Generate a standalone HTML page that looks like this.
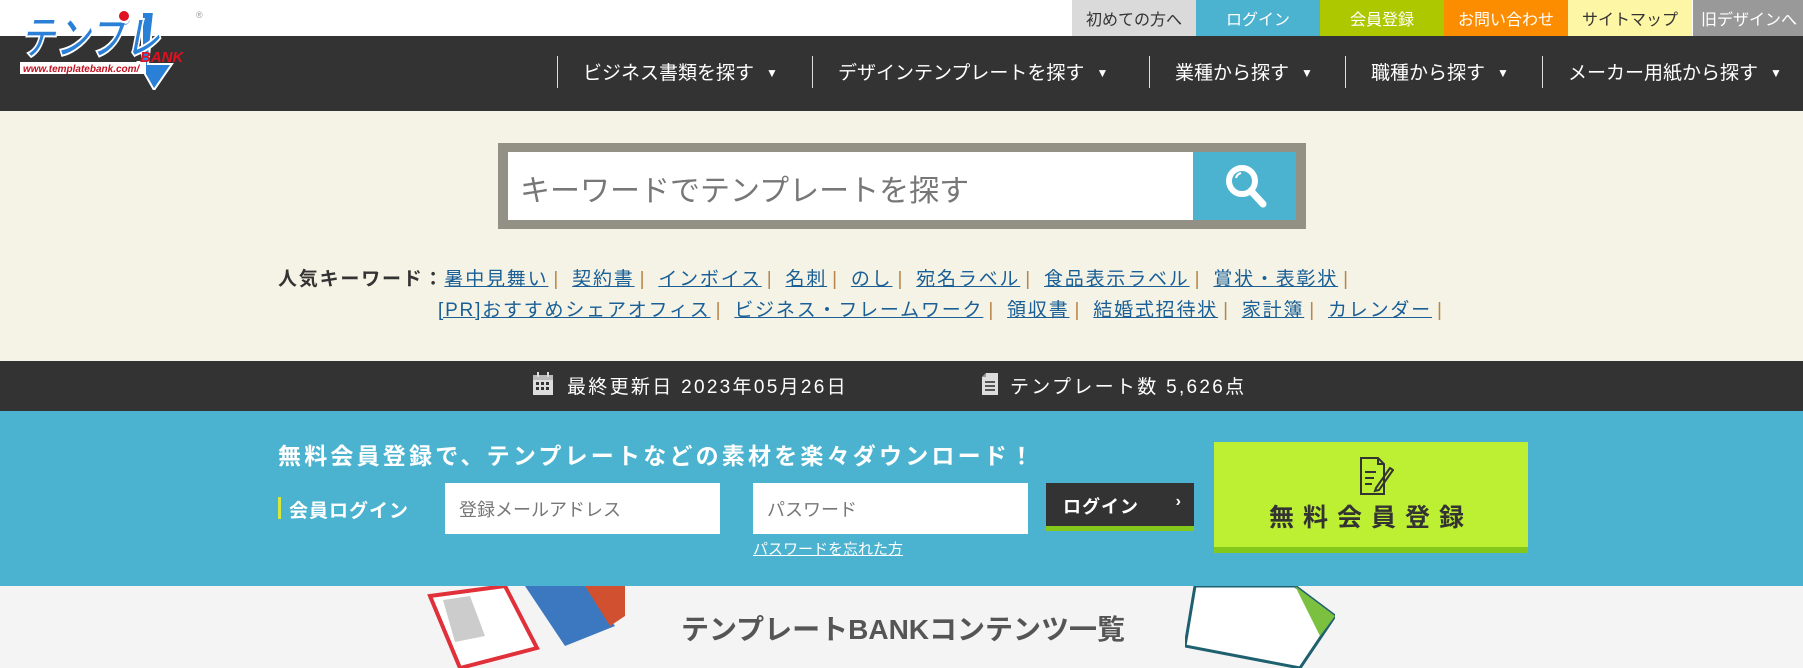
<!DOCTYPE html>
<html><head><meta charset="utf-8"><style>
*{margin:0;padding:0;box-sizing:border-box}
body{width:1803px;height:668px;overflow:hidden;background:#f4f4f4;font-family:"Liberation Sans","Noto Sans CJK JP",sans-serif;position:relative}
.a{position:absolute}
.top{top:0;height:36px;display:flex;align-items:center;justify-content:center;font-size:16px;width:124px}
.nav{top:36px;left:0;width:1803px;height:75px;background:#333}
.sep{top:56px;width:1px;height:32px;background:#ddd}
.nt{top:58px;color:#fff;font-size:19px;white-space:nowrap}
.nt b{font-weight:normal;font-size:12px;margin-left:12px;position:relative;top:-2px}
.kw{font-size:19px;color:#333;white-space:nowrap;letter-spacing:1.8px}
.kw a{color:#1a5f96;text-decoration:underline}
.kw i{font-style:normal;color:#b8864b;margin:0 12px 0 5px}
</style></head><body>
<div class="a" style="top:0;left:0;width:1803px;height:36px;background:#fff"></div>
<div class="a top" style="left:1072px;background:#dadada;color:#333">初めての方へ</div>
<div class="a top" style="left:1196px;background:#4bb3cf;color:#fff">ログイン</div>
<div class="a top" style="left:1320px;background:#aec800;color:#fff">会員登録</div>
<div class="a top" style="left:1444px;background:#fc8c00;color:#fff">お問い合わせ</div>
<div class="a top" style="left:1568px;background:#fdf6a5;color:#333">サイトマップ</div>
<div class="a top" style="left:1693px;width:110px;background:#999;color:#fff;justify-content:flex-start;padding-left:8px;white-space:nowrap;overflow:hidden">旧デザインへ</div>
<div class="a nav"></div>
<svg class="a" style="left:14px;top:4px" width="190" height="86" viewBox="0 0 190 86">
<polygon points="128,8 140,8 134,60 158,60 140,86 124,58 128,58" fill="#2a7fd6" stroke="#fff" stroke-width="2"/>
<text x="6" y="50" font-size="46" font-weight="bold" font-style="italic" fill="#2a7fd6" stroke="#fff" stroke-width="2" font-family="Liberation Sans,Noto Sans CJK JP,sans-serif" textLength="140" lengthAdjust="spacingAndGlyphs">テンプレ</text>
<circle cx="110" cy="12" r="6" fill="#e01020" stroke="#fff" stroke-width="2"/>
<text x="126" y="58" font-size="15" font-weight="bold" font-style="italic" fill="#e01020" font-family="Liberation Sans,sans-serif">BANK</text>
<rect x="6" y="58" width="126" height="12" fill="#fff"/>
<text x="9" y="68" font-size="10" font-style="italic" font-weight="bold" fill="#c01020" font-family="Liberation Sans,sans-serif">www.templatebank.com/</text>
<text x="182" y="14" font-size="9" fill="#999">®</text>
</svg>
<div class="a sep" style="left:557px"></div><div class="a nt" style="left:583px">ビジネス書類を探す<b>▼</b></div>
<div class="a sep" style="left:812px"></div><div class="a nt" style="left:838px">デザインテンプレートを探す<b>▼</b></div>
<div class="a sep" style="left:1149px"></div><div class="a nt" style="left:1175px">業種から探す<b>▼</b></div>
<div class="a sep" style="left:1345px"></div><div class="a nt" style="left:1371px">職種から探す<b>▼</b></div>
<div class="a sep" style="left:1542px"></div><div class="a nt" style="left:1568px">メーカー用紙から探す<b>▼</b></div>
<div class="a" style="top:111px;left:0;width:1803px;height:250px;background:#f5f3e5"></div>
<div class="a" style="left:498px;top:143px;width:808px;height:86px;background:#939186"></div>
<div class="a" style="left:508px;top:152px;width:685px;height:68px;background:#fff;font-size:30px;color:#777;padding:14px 12px;white-space:nowrap">キーワードでテンプレートを探す</div>
<div class="a" style="left:1193px;top:152px;width:103px;height:68px;background:#4bb3cf"></div>
<svg class="a" style="left:1223px;top:162px" width="48" height="50" viewBox="0 0 48 50"><circle cx="19" cy="19" r="13" fill="none" stroke="#fff" stroke-width="6"/><line x1="28" y1="29" x2="40" y2="42" stroke="#fff" stroke-width="7" stroke-linecap="round"/><path d="M13 16 A7 7 0 0 1 18 11" stroke="#fff" stroke-width="2" fill="none"/></svg>
<div class="a kw" style="left:278px;top:264px"><b>人気キーワード：</b><a>暑中見舞い</a><i>|</i><a>契約書</a><i>|</i><a>インボイス</a><i>|</i><a>名刺</a><i>|</i><a>のし</a><i>|</i><a>宛名ラベル</a><i>|</i><a>食品表示ラベル</a><i>|</i><a>賞状・表彰状</a><i>|</i></div>
<div class="a kw" style="left:438px;top:295px"><a>[PR]おすすめシェアオフィス</a><i>|</i><a>ビジネス・フレームワーク</a><i>|</i><a>領収書</a><i>|</i><a>結婚式招待状</a><i>|</i><a>家計簿</a><i>|</i><a>カレンダー</a><i>|</i></div>
<div class="a" style="top:361px;left:0;width:1803px;height:50px;background:#333"></div>
<svg class="a" style="left:532px;top:372px" width="22" height="24" viewBox="0 0 22 24"><rect x="1" y="3" width="20" height="20" fill="#ddd"/><rect x="1" y="3" width="20" height="5" fill="#bbb"/><g fill="#333"><rect x="4" y="10" width="3" height="3"/><rect x="9" y="10" width="3" height="3"/><rect x="14" y="10" width="3" height="3"/><rect x="4" y="15" width="3" height="3"/><rect x="9" y="15" width="3" height="3"/><rect x="14" y="15" width="3" height="3"/></g><rect x="5" y="0" width="2" height="5" fill="#ddd"/><rect x="15" y="0" width="2" height="5" fill="#ddd"/></svg>
<div class="a" style="left:567px;top:372px;color:#fff;font-size:19px;letter-spacing:2.3px">最終更新日 2023年05月26日</div>
<svg class="a" style="left:981px;top:372px" width="18" height="24" viewBox="0 0 18 24"><path d="M5 1H17V23H1V5Z" fill="#ddd"/><path d="M1 5H5V1" fill="#999"/><g fill="#555"><rect x="4" y="9" width="10" height="2"/><rect x="4" y="13" width="10" height="2"/><rect x="4" y="17" width="10" height="2"/></g></svg>
<div class="a" style="left:1010px;top:372px;color:#fff;font-size:19px;letter-spacing:2.3px">テンプレート数 5,626点</div>
<div class="a" style="top:411px;left:0;width:1803px;height:175px;background:#4bb3cf"></div>
<div class="a" style="left:278px;top:437px;color:#fff;font-size:23px;font-weight:bold;white-space:nowrap;letter-spacing:3.2px">無料会員登録で、テンプレートなどの素材を楽々ダウンロード！</div>
<div class="a" style="left:278px;top:497px;width:3px;height:22px;background:#d8e83a"></div>
<div class="a" style="left:289px;top:496px;color:#fff;font-size:19px;font-weight:bold;letter-spacing:1px">会員ログイン</div>
<div class="a" style="left:445px;top:483px;width:275px;height:51px;background:#fff;color:#777;font-size:18px;padding:13px 14px">登録メールアドレス</div>
<div class="a" style="left:753px;top:483px;width:275px;height:51px;background:#fff;color:#777;font-size:18px;padding:13px 14px">パスワード</div>
<div class="a" style="left:1046px;top:483px;width:148px;height:48px;background:#333;border-bottom:5px solid #84c81c;color:#fff;font-size:18px;font-weight:bold;padding:10px 17px;letter-spacing:1px">ログイン<span style="position:absolute;right:12px;font-size:16px">›</span></div>
<div class="a" style="left:753px;top:538px;color:#fff;font-size:15px;text-decoration:underline">パスワードを忘れた方</div>
<div class="a" style="left:1214px;top:442px;width:314px;height:111px;background:#bdef33;border-bottom:6px solid #84c81c"></div>
<svg class="a" style="left:1358px;top:456px" width="36" height="40" viewBox="0 0 36 40"><path d="M3 2H20L26 8V38H3Z" fill="none" stroke="#333" stroke-width="2"/><path d="M20 2V8H26" fill="none" stroke="#333" stroke-width="2"/><line x1="7" y1="16" x2="18" y2="16" stroke="#333" stroke-width="2"/><line x1="7" y1="22" x2="16" y2="22" stroke="#333" stroke-width="2"/><line x1="7" y1="28" x2="14" y2="28" stroke="#333" stroke-width="2"/><path d="M18 32L32 12L35 14L21 34L17 35Z" fill="none" stroke="#333" stroke-width="2"/></svg>
<div class="a" style="left:1214px;top:498px;width:314px;text-align:center;color:#333;font-size:25px;font-weight:bold;letter-spacing:9px">無料会員登録</div>
<svg class="a" style="left:425px;top:586px" width="230" height="82" viewBox="0 0 230 82"><polygon points="5,10 80,0 112,62 35,82" fill="#fff" stroke="#e0303a" stroke-width="4"/><polygon points="18,14 45,10 60,50 30,56" fill="#ccc"/><polygon points="100,0 160,0 190,40 140,60" fill="#3c78c0"/><polygon points="160,0 200,0 200,30 185,40" fill="#d05030"/></svg>
<svg class="a" style="left:1185px;top:586px" width="150" height="82" viewBox="0 0 150 82"><polygon points="10,0 110,0 150,30 115,82 0,60" fill="#fff" stroke="#1e6070" stroke-width="3"/><polygon points="110,0 150,30 135,50" fill="#7cc040"/></svg>
<div class="a" style="left:653px;top:608px;width:500px;text-align:center;color:#555;font-size:28px;font-weight:bold">テンプレートBANKコンテンツ一覧</div>
</body></html>
